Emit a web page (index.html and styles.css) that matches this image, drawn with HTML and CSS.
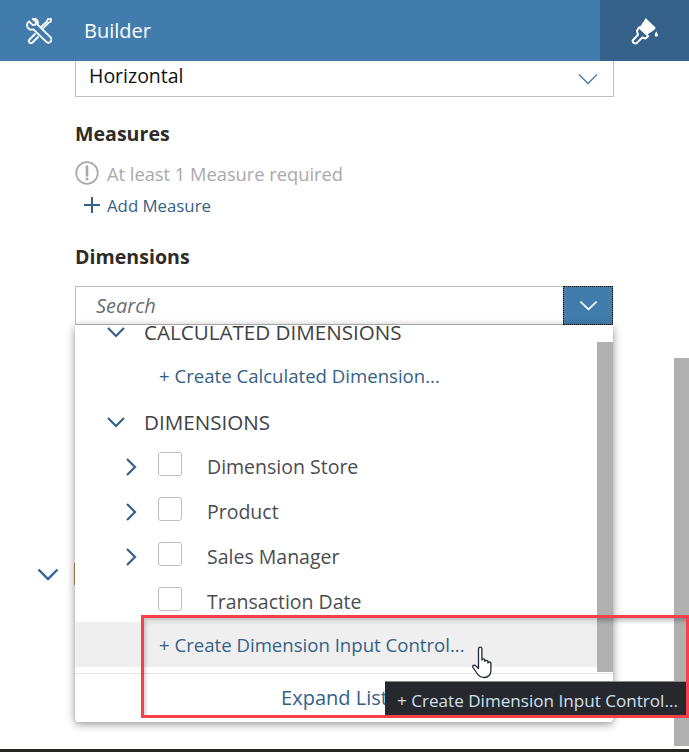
FILE: index.html
```html
<!DOCTYPE html>
<html lang="en">
<head>
    <meta charset="UTF-8">
    <meta name="viewport" content="width=device-width, initial-scale=1.0">
    <title>Builder</title>
    <link rel="stylesheet" href="styles.css">
</head>
<body>
    <header class="topbar">
        <div class="topbar-title">
            <svg class="topbar-icon" viewBox="0 0 26 26" width="26" height="26">
                <path d="M3 3.500l4 3.600 2.600-.6.6-2.600L6.700 1C9.500 0 12 1.800 12 4.700c0 .8-.2 1.400-.4 2l13 12.600c1.500 1.500 1 3.500-.2 4.500-1.200 1.100-3 1.300-4.300-.1L7.400 11.300c-3 1.200-6.400-.9-6.400-4.200 0-1.400.7-2.700 2-3.600z" fill="none" stroke="#fff" stroke-width="1.800" stroke-linejoin="round"/>
                <path d="M14.500 9.500L21 3.300l1-2.300 2.200-.5 1 1-.6 2.300-2.200 1-6.300 6.500M9.500 15.500L3.500 21.500c-1 1-1 2 0 3 1 .9 2 .9 3 0l6-6" fill="none" stroke="#fff" stroke-width="1.800" stroke-linejoin="round"/>
            </svg>
            <span>Builder</span>
        </div>
        <button class="topbar-action" type="button" aria-label="Styling">
            <svg viewBox="0 0 26 26" width="28" height="28">
                <path d="M13.500 1l9.500 9-1.500 2-4.500 3-2 1.500-7-7 1.500-2 3-4.500z" fill="#fff"/>
                <path d="M7.500 9.500l8.500 8.300-2.500 2.200-3-1-5 5c-1.300 1.200-4.300.2-4-2.200l5-5.300-1-3.500z" fill="none" stroke="#fff" stroke-width="1.800" stroke-linejoin="round"/>
                <path d="M23.500 13.500c.8 1.500 1.500 2.500 1.500 3.300 0 1-.7 1.500-1.500 1.500s-1.500-.6-1.500-1.500c0-.8.700-1.800 1.500-3.300z" fill="#fff"/>
            </svg>
        </button>
    </header>

    <main class="panel">
        <div class="select-box">
            <span class="select-value">Horizontal</span>
            <svg viewBox="0 0 20 12" width="20" height="12"><path d="M1 1.500l9 9 9-9" fill="none" stroke="#427cac" stroke-width="1.300"/></svg>
        </div>

        <h2 class="section-title measures-title">Measures</h2>
        <div class="notice">
            <svg viewBox="0 0 24 24" width="24" height="24">
                <circle cx="12" cy="12" r="10.800" fill="none" stroke="#a9a9a9" stroke-width="1.700"/>
                <path d="M12 5.500v9" stroke="#a9a9a9" stroke-width="2.600" stroke-linecap="round"/>
                <circle cx="12" cy="18" r="1.600" fill="#a9a9a9"/>
            </svg>
            <span>At least 1 Measure required</span>
        </div>
        <a class="add-link" href="#">
            <svg viewBox="0 0 16 16" width="16" height="16"><path d="M8 0v16M0 8h16" stroke="#346187" stroke-width="2"/></svg>
            <span>Add Measure</span>
        </a>

        <h2 class="section-title dimensions-title">Dimensions</h2>
        <div class="search-box">
            <span class="search-text">Search</span>
            <span class="search-toggle">
                <svg viewBox="0 0 20 12" width="19" height="12"><path d="M1.500 1.500l8.500 8 8.500-8" fill="none" stroke="#fff" stroke-width="1.800"/></svg>
            </span>
        </div>

        <div class="collapsed-row">
            <svg viewBox="0 0 22 13" width="22" height="13"><path d="M1.500 1.500l9.500 9.500 9.500-9.500" fill="none" stroke="#2f6497" stroke-width="2.400"/></svg>
            <span class="collapsed-mark"></span>
        </div>
    </main>

    <div class="page-scroll"></div>

    <section class="popup">
        <div class="popup-row group-row clipped-row">
            <svg class="twisty-down" viewBox="0 0 18 11" width="18" height="11"><path d="M1 1l8 8 8-8" fill="none" stroke="#346187" stroke-width="2.200"/></svg>
            <span>CALCULATED DIMENSIONS</span>
        </div>
        <div class="popup-row link-row create-calc">+ Create Calculated Dimension...</div>
        <div class="popup-row group-row">
            <svg class="twisty-down" viewBox="0 0 18 11" width="18" height="11"><path d="M1 1l8 8 8-8" fill="none" stroke="#346187" stroke-width="2.200"/></svg>
            <span>DIMENSIONS</span>
        </div>
        <div class="popup-row item-row">
            <svg class="twisty-right" viewBox="0 0 11 18" width="11" height="18"><path d="M1 1l8 8-8 8" fill="none" stroke="#346187" stroke-width="2.200"/></svg>
            <span class="check"></span>
            <span>Dimension Store</span>
        </div>
        <div class="popup-row item-row">
            <svg class="twisty-right" viewBox="0 0 11 18" width="11" height="18"><path d="M1 1l8 8-8 8" fill="none" stroke="#346187" stroke-width="2.200"/></svg>
            <span class="check"></span>
            <span>Product</span>
        </div>
        <div class="popup-row item-row">
            <svg class="twisty-right" viewBox="0 0 11 18" width="11" height="18"><path d="M1 1l8 8-8 8" fill="none" stroke="#346187" stroke-width="2.200"/></svg>
            <span class="check"></span>
            <span>Sales Manager</span>
        </div>
        <div class="popup-row item-row no-twisty">
            <span class="check"></span>
            <span>Transaction Date</span>
        </div>
        <div class="popup-row link-row create-input">+ Create Dimension Input Control...</div>
        <div class="popup-footer">Expand List</div>
        <div class="popup-scroll"></div>
    </section>

    <div class="highlight"></div>

    <div class="tooltip">+ Create Dimension Input Control...</div>

    <svg class="hand-cursor" viewBox="0 0 24 34" width="24" height="34">
        <path d="M6.500 3c0-2.600 3.400-2.600 3.400 0v11c0-1.600 3-1.600 3 0v1.500c0-1.600 3-1.600 3 0v1.500c0-1.500 3-1.500 3 0v7.500c0 4-2.600 7-6.500 7-3.500 0-5.600-1.400-7.300-4L1 21.500c-1-1.800 1.200-3.200 2.700-1.800l2.800 2.800z" fill="#fff" stroke="#1f2933" stroke-width="1.300" stroke-linejoin="round"/>
    </svg>

    <div class="bottom-strip"></div>
</body>
</html>
```

FILE: styles.css
```css
* {
    box-sizing: border-box;
}

html, body {
    height: 100%;
}

body {
    margin: 0;
    position: relative;
    width: 689px;
    height: 752px;
    overflow: hidden;
    background-color: #fff;
    font-family: "Open Sans", Arial, sans-serif;
    color: #32363a;
}

/* Barra superior */
.topbar {
    display: flex;
    justify-content: space-between;
    height: 61px;
    background-color: #427cac;
    color: #fff;
}

.topbar-title {
    display: flex;
    align-items: center;
    gap: 32px;
    padding-left: 26px;
    font-size: 20px;
}

.topbar-icon {
    flex: none;
}

.topbar-action {
    display: flex;
    align-items: center;
    justify-content: center;
    width: 89px;
    padding: 0;
    border: none;
    background-color: #36618a;
}

/* Panel */
.panel {
    width: 538px;
    margin-left: 75px;
}

.select-box {
    display: flex;
    justify-content: space-between;
    align-items: center;
    height: 36px;
    margin-right: -1px;
    padding: 0 15px 0 13px;
    border: 1px solid #bfbfbf;
    border-top: none;
    font-size: 19.500px;
    color: #111;
}

.select-value {
    margin-bottom: 6px;
}

.section-title {
    margin: 0;
    font-size: 19.600px;
    font-weight: 700;
    line-height: 24px;
    color: #2e2b28;
}

.measures-title {
    margin-top: 25px;
}

.notice {
    display: flex;
    align-items: center;
    gap: 8px;
    height: 24px;
    margin-top: 15px;
    font-size: 18.300px;
    color: #a9a9a9;
}

.add-link {
    display: flex;
    align-items: center;
    gap: 7px;
    height: 24px;
    margin-top: 8px;
    padding-left: 9px;
    font-size: 16.800px;
    color: #346187;
    text-decoration: none;
}

.dimensions-title {
    margin-top: 28px;
}

.search-box {
    display: flex;
    justify-content: space-between;
    height: 39px;
    margin-top: 17px;
    border: 1px solid #bfbfbf;
}

.search-text {
    padding-left: 20px;
    font-size: 20px;
    font-style: italic;
    line-height: 38px;
    color: #6a6d70;
}

.search-toggle {
    display: flex;
    align-items: center;
    justify-content: center;
    width: 50px;
    margin: -1px -1px -1px 0;
    background-color: #427cac;
    outline: 1px dotted #000;
    outline-offset: -1px;
}

.collapsed-row {
    position: relative;
    display: flex;
    align-items: center;
    margin: 238px 0 0 -38px;
    height: 22px;
}

.collapsed-mark {
    width: 2px;
    height: 22px;
    margin-left: 15px;
    background-color: #c09050;
}

.page-scroll {
    position: absolute;
    top: 358px;
    right: 0;
    width: 15px;
    height: 388px;
    background-color: #b0b0b0;
}

/* Lista desplegable */
.popup {
    position: absolute;
    top: 325px;
    left: 75px;
    width: 538px;
    height: 397px;
    overflow: hidden;
    background-color: #fff;
    border-radius: 0 0 4px 4px;
    box-shadow: 0 2px 8px rgba(0, 0, 0, 0.45);
}

.popup-row {
    display: flex;
    align-items: center;
    height: 45px;
    font-size: 19.500px;
    color: #4a4d50;
    white-space: nowrap;
}

.clipped-row {
    height: 14px;
}

.group-row {
    gap: 19px;
    height: 44px;
    padding-left: 32px;
    font-size: 20.600px;
    color: #3f4245;
}

.group-row.clipped-row {
    height: 14px;
}

.link-row {
    font-size: 18.600px;
    color: #346187;
}

.create-calc {
    height: 61px;
    padding: 11px 0 0 84px;
}

.item-row {
    padding-left: 51px;
}

.twisty-right {
    flex: none;
    margin-right: 21px;
}

.no-twisty {
    height: 43px;
    padding: 2px 0 0 83px;
}

.check {
    flex: none;
    width: 24px;
    height: 24px;
    margin-right: 25px;
    margin-top: -6px;
    background-color: #fff;
    border: 1px solid #bfbfbf;
    border-radius: 3px;
}

.create-input {
    height: 45px;
    padding-left: 84px;
    background-color: #efefef;
}

.popup-footer {
    margin-top: 6px;
    height: 49px;
    padding-right: 19px;
    border-top: 1px solid #e5e5e5;
    font-size: 20px;
    line-height: 47px;
    text-align: center;
    color: #346187;
}

.popup-scroll {
    position: absolute;
    top: 17px;
    right: 0;
    width: 16px;
    height: 330px;
    background-color: #b0b0b0;
}

/* Anotaciones encima de la pantalla */
.highlight {
    position: absolute;
    top: 615px;
    left: 141px;
    width: 548px;
    height: 103px;
    border: 3px solid #f9404a;
    box-shadow: inset 3px 5px 4px -2px rgba(0, 0, 0, 0.25);
}

.tooltip {
    position: absolute;
    top: 681px;
    left: 385px;
    width: 301px;
    height: 34px;
    padding-left: 12px;
    background-color: #27282d;
    border-top: 1px solid #888;
    font-size: 17.100px;
    line-height: 37px;
    color: #cfe0ec;
    white-space: nowrap;
}

.hand-cursor {
    position: absolute;
    top: 646px;
    left: 472px;
}

.bottom-strip {
    position: absolute;
    left: 0;
    right: 0;
    bottom: 0;
    height: 3px;
    background-color: #2a2420;
}
```
